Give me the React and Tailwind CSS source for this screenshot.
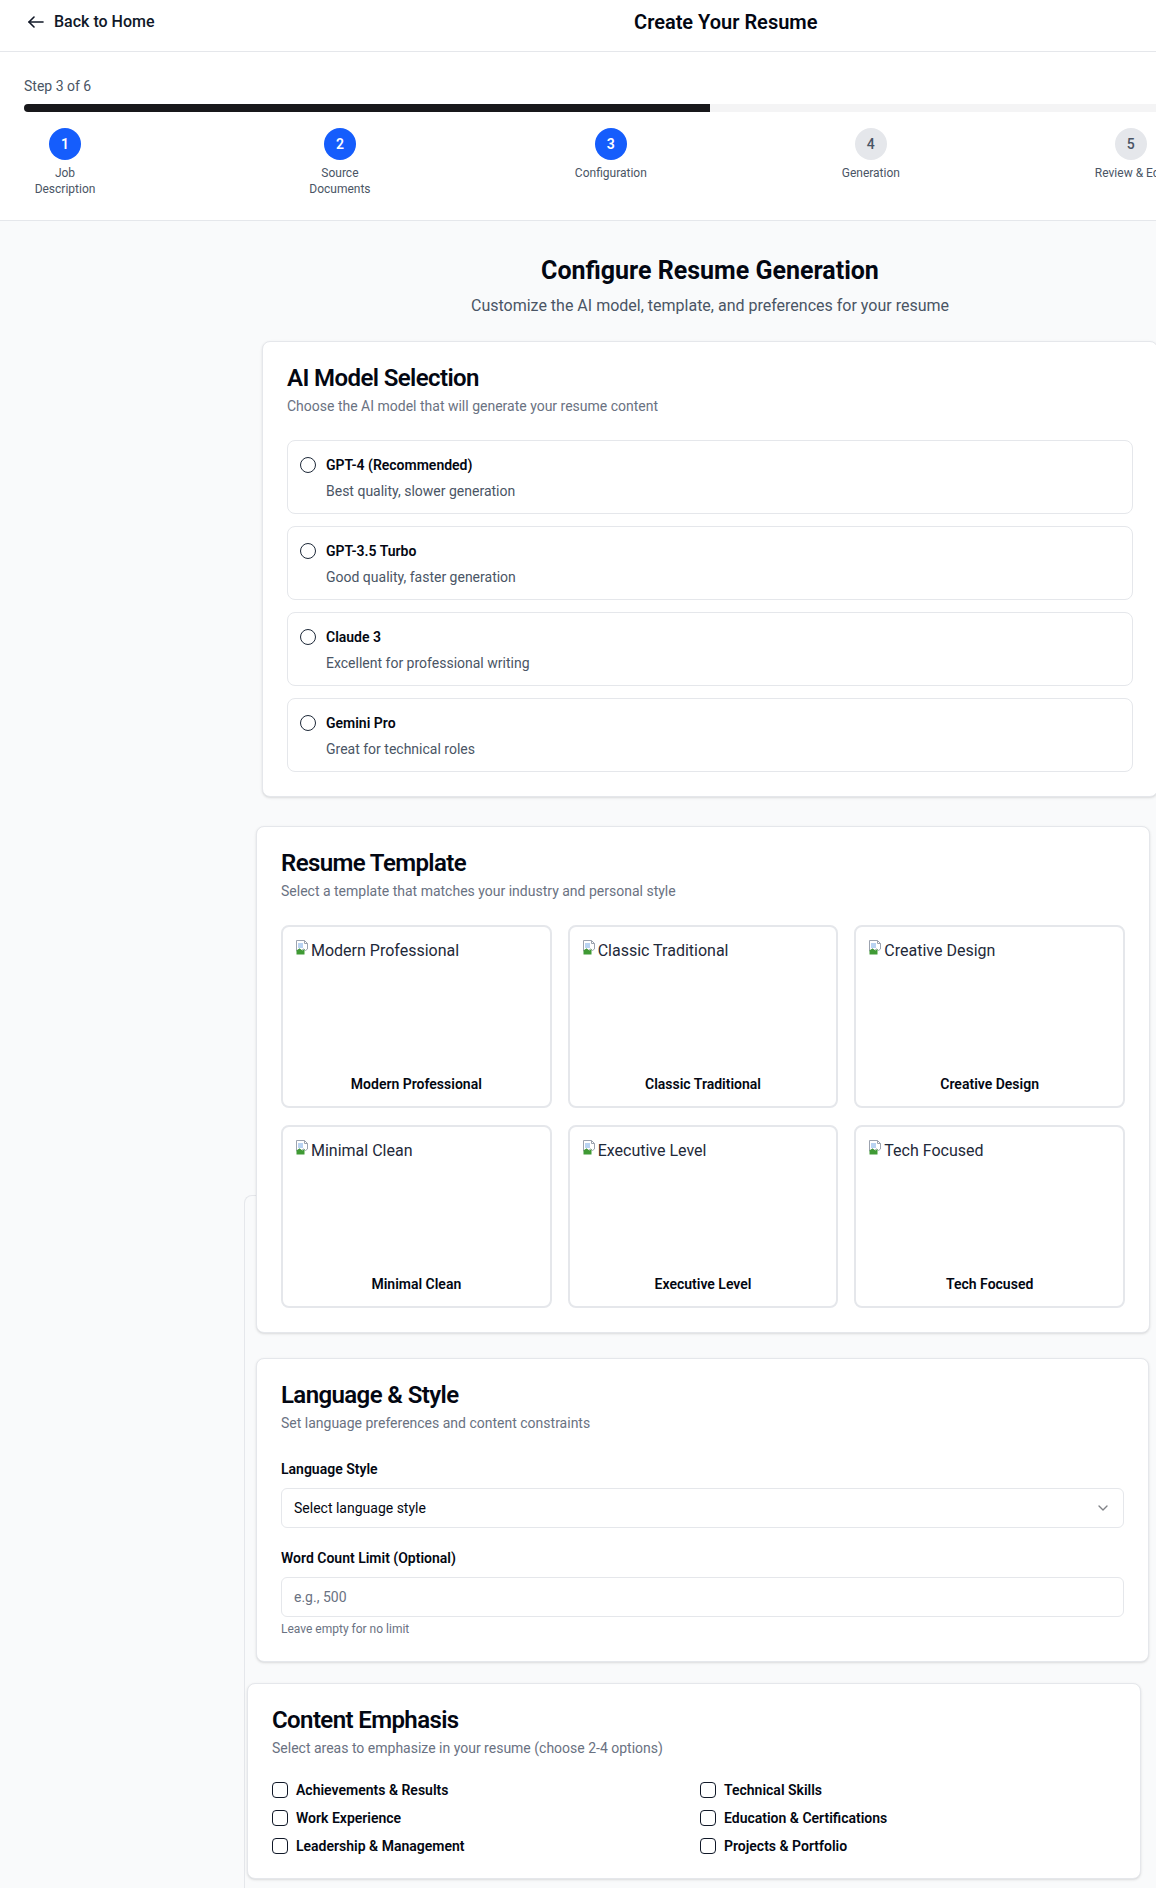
import { ChevronDown } from "lucide-react";

const models = [
  { name: "GPT-4 (Recommended)", desc: "Best quality, slower generation" },
  { name: "GPT-3.5 Turbo", desc: "Good quality, faster generation" },
  { name: "Claude 3", desc: "Excellent for professional writing" },
  { name: "Gemini Pro", desc: "Great for technical roles" },
];

const templates = [
  "Modern Professional",
  "Classic Traditional",
  "Creative Design",
  "Minimal Clean",
  "Executive Level",
  "Tech Focused",
];

const steps = [
  { n: 1, label: "Job Description", done: true },
  { n: 2, label: "Source Documents", done: true },
  { n: 3, label: "Configuration", done: true },
  { n: 4, label: "Generation", done: false },
  { n: 5, label: "Review & Edit", done: false },
  { n: 6, label: "Export", done: false },
];

const emphasis = [
  "Achievements & Results",
  "Technical Skills",
  "Work Experience",
  "Education & Certifications",
  "Leadership & Management",
  "Projects & Portfolio",
];

function BackArrow() {
  return (
    <svg width="16" height="12" viewBox="0 0 16 12" fill="none" stroke="#111827" strokeWidth="1.6" strokeLinecap="round" strokeLinejoin="round">
      <path d="M15 6H1" />
      <path d="M6 1 1 6l5 5" />
    </svg>
  );
}

function BrokenImage() {
  return (
    <svg width="16" height="16" viewBox="0 0 16 16" className="shrink-0">
      <path d="M1.5 1.5h8l3 3v5.5l-2 1.5-2-1.5-2 1.5-2-1.5-3 2z" fill="#fff" stroke="#9ca3af" />
      <path d="M9.5 1.5v3h3" fill="none" stroke="#9ca3af" />
      <rect x="3" y="4" width="5" height="5" fill="#b9d3f2" />
      <path d="M1.5 15.5v-4l3-2 3 2 2-1.5v5.5z" fill="#3f9a34" />
    </svg>
  );
}

function CardHead({ title, desc }) {
  return (
    <div className="p-6">
      <h3 className="text-2xl font-semibold leading-none tracking-tight text-gray-950">{title}</h3>
      <p className="mt-1.5 text-sm text-gray-500">{desc}</p>
    </div>
  );
}

export default function App() {
  return (
    <div className="relative w-[1420px] min-h-screen bg-gray-50 font-['Roboto',sans-serif] text-gray-950">
      {/* header */}
      <header className="bg-white border-b border-gray-200">
        <div className="flex items-start h-[51px] px-6 pt-[10px]">
          <button className="flex items-center gap-[10px] pl-1 h-6 text-base font-medium text-gray-900">
            <BackArrow />
            Back to Home
          </button>
          <h1 className="flex-1 text-center pr-[99px] text-xl leading-6 font-semibold text-gray-950">Create Your Resume</h1>
        </div>
      </header>

      {/* progress */}
      <div className="bg-white border-b border-gray-200 px-6 pt-6 pb-[23px]">
        <div className="flex justify-between text-sm text-gray-600 mb-2">
          <span>Step 3 of 6</span>
          <span>50% Complete</span>
        </div>
        <div className="h-2 w-full rounded-full bg-[#f4f4f5] overflow-hidden">
          <div className="h-full w-1/2 bg-[#18181b]" />
        </div>
        <div className="mt-4 flex justify-between pl-px">
          {steps.map((s) => (
            <div key={s.n} className="flex flex-col items-center">
              <div
                className={
                  s.done
                    ? "w-8 h-8 rounded-full flex items-center justify-center text-sm font-semibold bg-blue-600 text-white"
                    : "w-8 h-8 rounded-full flex items-center justify-center text-sm font-medium bg-gray-200 text-gray-600"
                }
              >
                {s.n}
              </div>
              <span className="mt-[5px] max-w-20 text-center text-xs text-gray-600">{s.label}</span>
            </div>
          ))}
        </div>
      </div>

      <div className="absolute left-[244px] top-[1195px] bottom-0 w-6 border-l border-t border-gray-200 rounded-tl-lg" />

      <main className="relative w-[896px] mx-auto pt-[34px] pb-8">
        <div className="text-center mb-[23px]">
          <h2 className="text-[25px] leading-8 font-bold text-gray-950">Configure Resume Generation</h2>
          <p className="mt-[7px] text-base text-gray-600">Customize the AI model, template, and preferences for your resume</p>
        </div>

        {/* AI model */}
        <section className="bg-white rounded-lg border border-gray-200 shadow-sm">
          <CardHead title="AI Model Selection" desc="Choose the AI model that will generate your resume content" />
          <div className="px-6 pb-6 space-y-3">
            {models.map((m) => (
              <label key={m.name} className="flex items-start gap-2.5 p-3 border border-gray-200 rounded-lg">
                <span className="mt-1 h-4 w-4 shrink-0 rounded-full border border-gray-800" />
                <div>
                  <div className="text-sm font-semibold leading-6 text-gray-950">{m.name}</div>
                  <div className="mt-1 text-sm text-gray-600">{m.desc}</div>
                </div>
              </label>
            ))}
          </div>
        </section>

        {/* templates */}
        <section className="mt-[29px] ml-[-6px] w-[894px] bg-white rounded-lg border border-gray-200 shadow-sm">
          <CardHead title="Resume Template" desc="Select a template that matches your industry and personal style" />
          <div className="px-6 pb-6 grid grid-cols-3 gap-x-4 gap-y-[17px]">
            {templates.map((t) => (
              <div key={t} className="border-2 border-gray-200 rounded-lg p-3 bg-white">
                <div className="h-32 flex items-start">
                  <BrokenImage />
                  <span className="text-base leading-6 text-gray-800">{t}</span>
                </div>
                <p className="mt-[7px] text-sm font-semibold text-center text-gray-950">{t}</p>
              </div>
            ))}
          </div>
        </section>

        {/* language */}
        <section className="mt-[25px] ml-[-6px] w-[893px] bg-white rounded-lg border border-gray-200 shadow-sm">
          <CardHead title="Language & Style" desc="Set language preferences and content constraints" />
          <div className="px-6 pb-6">
            <label className="block text-sm font-semibold leading-6 text-gray-950">Language Style</label>
            <div className="mt-[7px] h-10 px-3 flex items-center justify-between rounded-md border border-gray-200 bg-white text-sm text-gray-950">
              <span>Select language style</span>
              <ChevronDown className="h-4 w-4 opacity-50" />
            </div>
            <label className="mt-[18px] block text-sm font-semibold leading-6 text-gray-950">Word Count Limit (Optional)</label>
            <input
              type="number"
              placeholder="e.g., 500"
              className="mt-[7px] h-10 w-full px-3 rounded-md border border-gray-200 bg-white text-sm placeholder:text-gray-500"
            />
            <p className="mt-1 text-xs text-gray-500">Leave empty for no limit</p>
          </div>
        </section>

        {/* emphasis */}
        <section className="mt-[21px] ml-[-15px] w-[894px] bg-white rounded-lg border border-gray-200 shadow-sm">
          <CardHead title="Content Emphasis" desc="Select areas to emphasize in your resume (choose 2-4 options)" />
          <div className="px-6 pb-6 grid grid-cols-2 gap-3">
            {emphasis.map((e) => (
              <label key={e} className="flex items-center gap-2">
                <span className="h-4 w-4 shrink-0 rounded-sm border border-gray-900" />
                <span className="text-sm font-semibold leading-none text-gray-950">{e}</span>
              </label>
            ))}
          </div>
        </section>
      </main>
    </div>
  );
}
